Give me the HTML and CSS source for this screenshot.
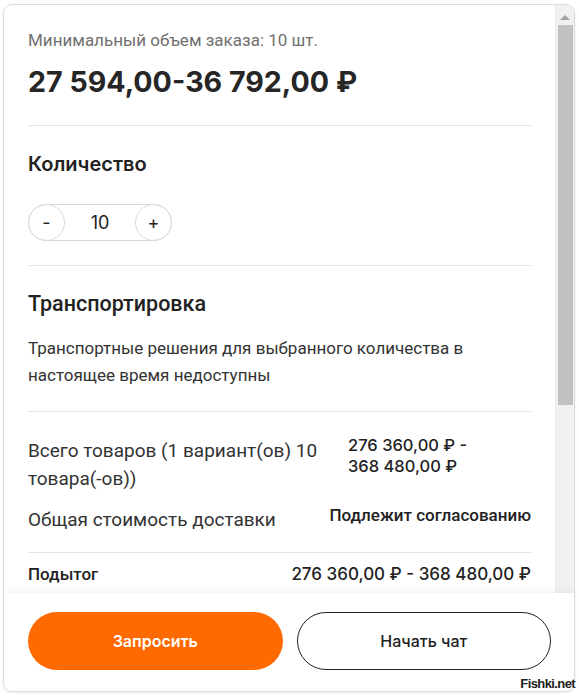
FILE: index.html
```html
<!DOCTYPE html>
<html lang="ru">
<head>
<meta charset="utf-8">
<link rel="stylesheet" href="styles.css">
</head>
<body>
<div class="card">
  <div class="body">
    <div class="content">
      <p class="min">Минимальный объем заказа: 10 шт.</p>
      <p class="price">27 594,00-36 792,00 ₽</p>
      <div class="divider d1"></div>
      <h2 class="qty-title">Количество</h2>
      <div class="stepper">
        <span class="step-btn">-</span>
        <span class="step-val">10</span>
        <span class="step-btn">+</span>
      </div>
      <div class="divider d2"></div>
      <h2 class="ship-title">Транспортировка</h2>
      <p class="ship-text">Транспортные решения для выбранного количества в настоящее время недоступны</p>
      <div class="divider d3"></div>
      <div class="row r1">
        <span class="row-label">Всего товаров (1 вариант(ов) 10 товара(-ов))</span>
        <span class="row-val range">276 360,00 ₽ -<br>368 480,00 ₽</span>
      </div>
      <div class="row r2">
        <span class="row-label">Общая стоимость доставки</span>
        <span class="row-val neg">Подлежит согласованию</span>
      </div>
      <div class="divider d4"></div>
      <div class="row sub">
        <span class="sub-label">Подытог</span>
        <span class="sub-val">276 360,00 ₽ - 368 480,00 ₽</span>
      </div>
    </div>
    <div class="scrollbar">
      <div class="arrow"></div>
      <div class="thumb"></div>
    </div>
  </div>
  <div class="footer">
    <button class="btn primary">Запросить</button>
    <button class="btn outline">Начать чат</button>
  </div>
</div>
<div class="watermark">Fishki.net</div>
</body>
</html>
```
FILE: styles.css
```css
* { box-sizing: border-box; }
html, body { margin: 0; padding: 0; background: #fff; }
body { font-family: Roboto, "Noto Sans", sans-serif; color: #222; position: relative; width: 579px; height: 696px; overflow: hidden; }

.card {
  margin: 4px 0 0 3px;
  width: 572px;
  height: 688px;
  border: 1px solid #dcdcdc;
  border-radius: 9px;
  overflow: hidden;
  display: flex;
  flex-direction: column;
  background: #fff;
  box-shadow: 0 1px 3px rgba(0,0,0,0.08);
}
.body { flex: 1; display: flex; overflow: hidden; min-height: 0; }
.content { flex: 1; padding: 25px 24px 0 24px; overflow: hidden; }

.min { margin: 0; font-size: 17px; line-height: 20px; color: #707070; }
.price { margin: 14px 0 0; font-family: Inter, sans-serif; font-weight: 700; font-size: 28.6px; line-height: 36px; color: #262626; }

.divider { height: 1px; background: #e3e3e3; }
.d1 { margin-top: 25px; }
.d2 { margin-top: 24px; }
.d3 { margin-top: 22px; }
.d4 { margin-top: 18px; }

.qty-title { margin: 24px 0 0; font-family: Inter, sans-serif; font-weight: 600; font-size: 20px; line-height: 28px; color: #222; }
.stepper {
  margin-top: 26px;
  width: 144px;
  height: 37px;
  border: 1px solid #d8dae2;
  border-radius: 19px;
  display: flex;
  align-items: center;
  justify-content: space-between;
}
.step-btn {
  width: 37px; height: 37px; margin: -1px;
  border: 1px solid #d8dae2; border-radius: 50%;
  display: flex; align-items: center; justify-content: center;
  font-family: Inter, sans-serif; font-size: 18px; color: #222;
}
.step-val { font-family: Inter, sans-serif; font-size: 18px; color: #222; }

.ship-title { margin: 24px 0 0; font-weight: 500; font-size: 21.5px; line-height: 28px; color: #222; }
.ship-text { margin: 17px 0 0; font-size: 17px; line-height: 27px; color: #333; width: 470px; }

.row { display: flex; justify-content: space-between; align-items: flex-start; }
.r1 { margin-top: 25px; }
.r2 { margin-top: 13px; }
.row-label { font-size: 19px; line-height: 28px; color: #333; }
.r1 .row-label { width: 305px; }
.row-val { font-size: 17px; line-height: 21px; }
.range { font-family: Inter, sans-serif; font-size: 16.5px; font-weight: 500; width: 183px; margin-top: -2px; color: #222; }
.neg { font-weight: 500; color: #222; margin-top: -1px; }

.sub { margin-top: 10px; align-items: center; }
.sub-label { font-weight: 500; font-size: 17px; line-height: 22px; color: #222; }
.sub-val { font-family: Inter, sans-serif; font-weight: 500; font-size: 17px; line-height: 22px; color: #222; }

.scrollbar { width: 19px; background: #f1f1f1; position: relative; border-left: 1px solid #ececec; }
.arrow {
  width: 0; height: 0; margin: 10px auto 0;
  border-left: 5px solid transparent; border-right: 5px solid transparent;
  border-bottom: 5px solid #a3a3a3;
}
.thumb { margin: 5px 0 0 2px; width: 15px; height: 380px; background: #c1c1c1; }

.footer {
  height: 98px;
  padding: 19px 23px 0 24px;
  display: grid;
  grid-template-columns: 1fr 1fr;
  column-gap: 14px;
  align-items: start;
  background: #fff;
  box-shadow: 0 -3px 8px rgba(0,0,0,0.05);
  position: relative;
}
.btn {
  height: 58px; border-radius: 29px;
  font-family: Inter, sans-serif; font-size: 16px; font-weight: 600;
}
.primary { background: #ff6a00; color: #fff; border: none; }
.outline { background: #fff; color: #222; border: 1px solid #222; font-weight: 500; }

.watermark {
  position: absolute; right: 4px; bottom: 5px;
  font-family: "Liberation Sans", Arial, sans-serif; font-weight: 700; font-size: 13px; letter-spacing: -0.6px;
  color: #222;
  text-shadow: 1px 0 #fff, -1px 0 #fff, 0 1px #fff, 0 -1px #fff;
}
```
